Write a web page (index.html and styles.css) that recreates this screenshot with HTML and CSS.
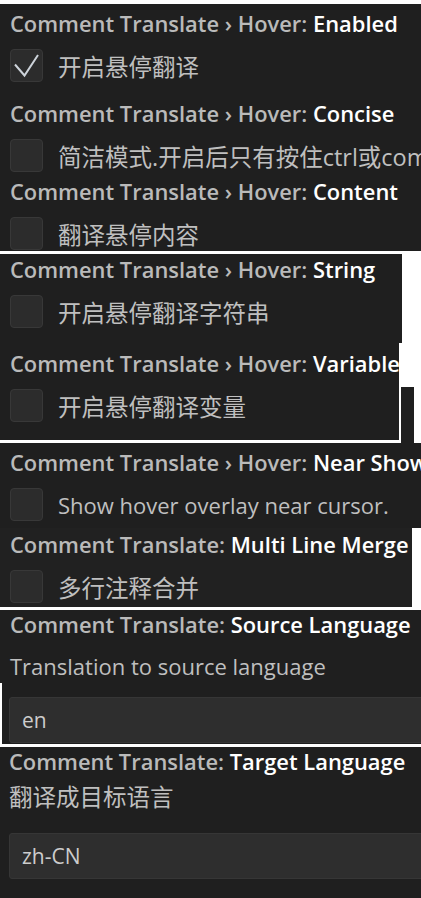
FILE: index.html
```html
<!DOCTYPE html>
<html lang="zh-CN">
<head>
<meta charset="utf-8">
<title>Comment Translate Settings</title>
<link rel="stylesheet" href="styles.css">
</head>
<body>
<div class="page">
  <div class="gap-top"></div>

  <section class="panel p1">
    <div class="setting">
      <div class="title"><span class="cat">Comment Translate › Hover: </span><span class="key">Enabled</span></div>
      <div class="row"><span class="box"><svg width="33" height="33" viewBox="0 0 33 33"><polyline points="5,15.5 14.5,26.5 28,6" fill="none" stroke="#cdd3da" stroke-width="2"/></svg></span><span class="desc">开启悬停翻译</span></div>
    </div>
    <div class="setting s-concise">
      <div class="title"><span class="cat">Comment Translate › Hover: </span><span class="key">Concise</span></div>
      <div class="row"><span class="box"></span><span class="desc">简洁模式.开启后只有按住ctrl或com</span></div>
    </div>
    <div class="setting s-content">
      <div class="title"><span class="cat">Comment Translate › Hover: </span><span class="key">Content</span></div>
      <div class="row"><span class="box"></span><span class="desc">翻译悬停内容</span></div>
    </div>
  </section>

  <div class="gap-line"></div>

  <section class="panel p2">
    <div class="setting">
      <div class="title"><span class="cat">Comment Translate › Hover: </span><span class="key">String</span></div>
      <div class="row"><span class="box"></span><span class="desc">开启悬停翻译字符串</span></div>
    </div>
  </section>

  <div class="strip">
    <section class="panel p3">
      <div class="setting">
        <div class="title"><span class="cat">Comment Translate › Hover: </span><span class="key">Variable</span></div>
        <div class="row"><span class="box"></span><span class="desc">开启悬停翻译变量</span></div>
      </div>
    </section>
    <div class="sliver"></div>
  </div>

  <section class="panel p4">
    <div class="setting">
      <div class="title"><span class="cat">Comment Translate › Hover: </span><span class="key">Near Show</span></div>
      <div class="row"><span class="box"></span><span class="desc en">Show hover overlay near cursor.</span></div>
    </div>
  </section>

  <section class="panel p5">
    <div class="setting">
      <div class="title"><span class="cat">Comment Translate: </span><span class="key">Multi Line Merge</span></div>
      <div class="row row-merge"><span class="box"></span><span class="desc">多行注释合并</span></div>
    </div>
  </section>

  <div class="gap-line"></div>

  <section class="panel p6">
    <div class="setting">
      <div class="title"><span class="cat">Comment Translate: </span><span class="key">Source Language</span></div>
      <div class="text-desc en">Translation to source language</div>
      <div class="input-wrap"><div class="input">en</div></div>
    </div>
  </section>

  <div class="gap-line"></div>

  <section class="panel p7">
    <div class="setting">
      <div class="title"><span class="cat">Comment Translate: </span><span class="key">Target Language</span></div>
      <div class="text-desc target-desc">翻译成目标语言</div>
      <div class="input input-target">zh-CN</div>
    </div>
  </section>
</div>
</body>
</html>
```

FILE: styles.css
```css
* {
  box-sizing: border-box;
  margin: 0;
  padding: 0;
}

html,
body {
  background: #ffffff;
}

body {
  margin: 0;
  width: 421px;
  height: 898px;
  overflow: hidden;
  font-family: "Open Sans", "Noto Sans CJK SC", sans-serif;
}

.page {
  display: flex;
  flex-direction: column;
}

.gap-top {
  height: 4px;
  flex: none;
}

.gap-line {
  height: 3px;
  flex: none;
}

.panel {
  background: #1f1f1f;
  overflow: hidden;
  padding-left: 10px;
  flex: none;
}

.p1 {
  width: 421px;
  height: 247px;
  padding-top: 5px;
}

.s-concise {
  margin-top: 17px;
}

.s-content {
  margin-top: 5px;
}

.p2 {
  width: 402px;
  height: 89px;
  padding-top: 1px;
}

.strip {
  display: flex;
  height: 100px;
  flex: none;
}

.p3 {
  width: 401px;
  height: 100px;
  padding-top: 6px;
  border-right: 2px solid #ffffff;
  border-bottom: 3px solid #ffffff;
}

.sliver {
  width: 13px;
  margin-top: 44px;
  height: 56px;
  background: #1f1f1f;
}

.p4 {
  width: 421px;
  height: 85px;
  padding-top: 5px;
}

.p5 {
  width: 412px;
  height: 79px;
  padding-top: 2px;
  background: #212121;
}

.row-merge {
  margin-top: 13px;
}

.p6 {
  width: 421px;
  height: 134px;
  padding-left: 0;
}

.p6 .title,
.p6 .text-desc {
  padding-left: 10px;
}

.p7 {
  width: 421px;
  height: 151px;
  padding-left: 0;
}

.p7 .title,
.p7 .text-desc {
  padding-left: 9px;
}

.title {
  height: 30px;
  line-height: 30px;
  font-size: 21.9px;
  font-weight: 600;
  white-space: nowrap;
  color: #bababa;
}

.title .key {
  color: #ffffff;
}

.row {
  display: flex;
  align-items: center;
  gap: 15px;
  height: 33px;
  margin-top: 10px;
  white-space: nowrap;
}

.box {
  width: 33px;
  height: 33px;
  flex: none;
  border-radius: 4px;
  background: #2c2c2c;
  border: 1px solid #383838;
  display: flex;
  align-items: center;
  justify-content: center;
}

.box svg {
  display: block;
  margin: -1px;
}

.desc {
  font-size: 23.5px;
  color: #bfbfbf;
}

.desc.en {
  font-size: 22px;
}

.text-desc {
  height: 30px;
  line-height: 30px;
  margin-top: 11px;
  font-size: 23.5px;
  color: #bfbfbf;
  white-space: nowrap;
}

.text-desc.en {
  font-size: 22px;
}

.target-desc {
  margin-top: 5px;
}

.input-wrap {
  margin-top: 2px;
  height: 61px;
  border-left: 2px solid #ffffff;
  padding: 14px 0 0 7px;
}

.input {
  height: 46px;
  line-height: 44px;
  padding-left: 12px;
  background: #2e2e2e;
  border: 1px solid #363636;
  border-radius: 3px;
  font-size: 21px;
  color: #cccccc;
  margin-right: -4px;
}

.input-target {
  margin-top: 21px;
  margin-left: 9px;
}
```
